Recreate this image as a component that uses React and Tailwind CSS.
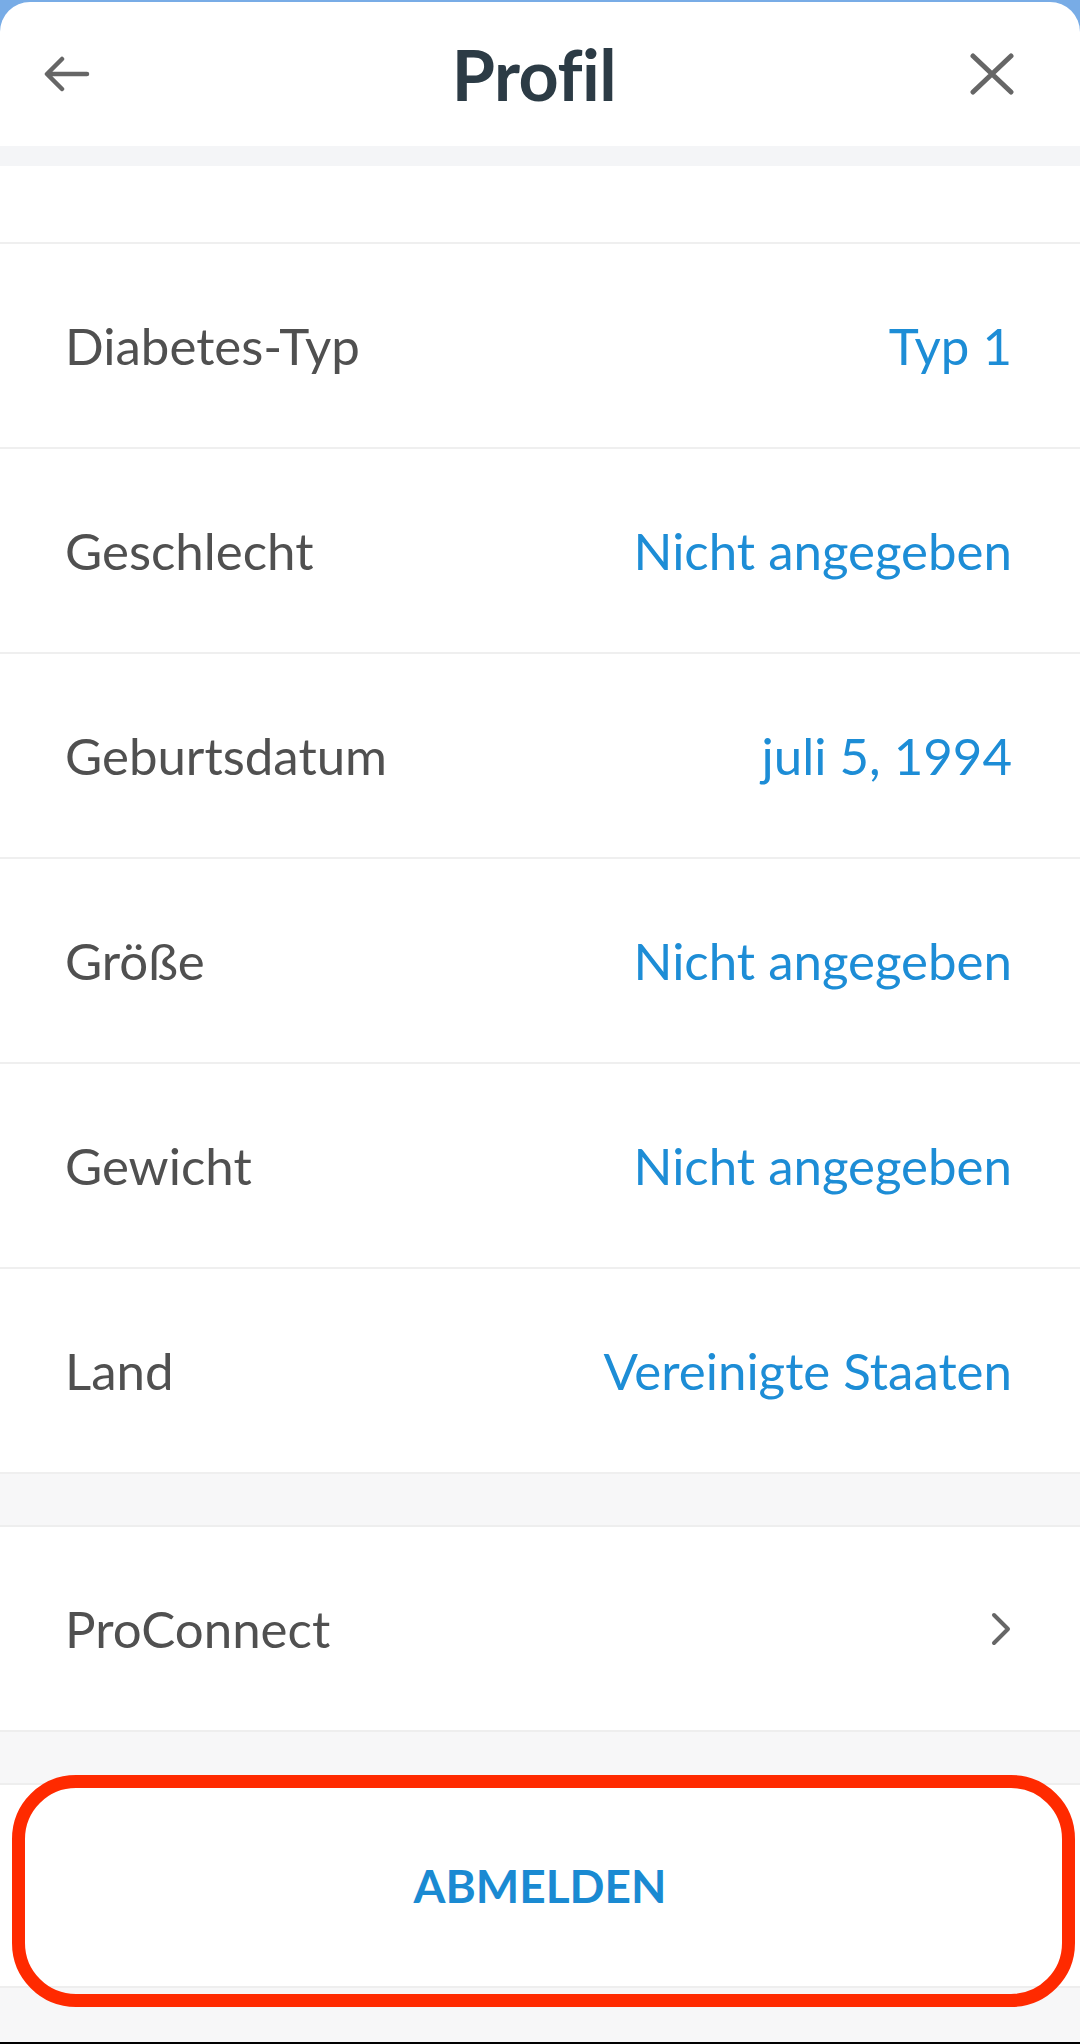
import React from "react";

const rows = [
  { label: "Diabetes-Typ", value: "Typ 1" },
  { label: "Geschlecht", value: "Nicht angegeben" },
  { label: "Geburtsdatum", value: "juli 5, 1994" },
  { label: "Größe", value: "Nicht angegeben" },
  { label: "Gewicht", value: "Nicht angegeben" },
  { label: "Land", value: "Vereinigte Staaten" },
];

function BackIcon() {
  return (
    <svg width="46" height="36" viewBox="0 0 46 36" fill="none">
      <path d="M43 18H4M18 3L3 18l15 15" stroke="#666" strokeWidth="4.5" strokeLinecap="round" strokeLinejoin="round" />
    </svg>
  );
}

function CloseIcon() {
  return (
    <svg width="44" height="42" viewBox="0 0 44 42" fill="none">
      <path d="M3 3l38 36M41 3L3 39" stroke="#666" strokeWidth="5" strokeLinecap="round" />
    </svg>
  );
}

function Chevron() {
  return (
    <svg width="22" height="34" viewBox="0 0 22 34" fill="none">
      <path d="M4 3l14 14L4 31" stroke="#666" strokeWidth="4" strokeLinecap="round" strokeLinejoin="round" />
    </svg>
  );
}

export default function App() {
  return (
    <div
      className="relative w-[1080px] h-[2044px] overflow-hidden bg-[#78ace6]"
      style={{ fontFamily: "Lato, 'Open Sans', sans-serif" }}
    >
      <div className="mt-[2px] flex h-[2042px] flex-col overflow-hidden rounded-t-[30px] bg-white">
        {/* header */}
        <div className="flex h-[144px] shrink-0 items-center justify-between pl-[44px] pr-[66px]">
          <BackIcon />
          <h1 className="ml-[8px] text-[70px] font-bold leading-none tracking-[-0.5px] text-[#2c3b45]">Profil</h1>
          <CloseIcon />
        </div>
        <div className="h-[20px] shrink-0 bg-[#f4f5f7]" />

        {/* list */}
        <div className="h-[78px] shrink-0 border-b-2 border-[#efefef] bg-white" />
        {rows.map((r) => (
          <div
            key={r.label}
            className="flex h-[205px] shrink-0 items-center justify-between border-b-2 border-[#efefef] pl-[65px] pr-[68px]"
          >
            <span className="text-[51px] leading-none text-[#505050]">{r.label}</span>
            <span className="text-[51px] leading-none text-[#1d8dd6]">{r.value}</span>
          </div>
        ))}

        <div className="h-[53px] shrink-0 border-b-2 border-[#eeeeee] bg-[#f7f7f8]" />
        <div className="flex h-[205px] shrink-0 items-center justify-between border-b-2 border-[#eeeeee] pl-[65px] pr-[68px]">
          <span className="text-[51px] leading-none text-[#505050]">ProConnect</span>
          <Chevron />
        </div>
        <div className="h-[53px] shrink-0 border-b-2 border-[#eeeeee] bg-[#f7f7f8]" />
        <div className="flex h-[203px] shrink-0 items-center justify-center border-b-2 border-[#eeeeee]">
          <span className="text-[46px] font-bold leading-none text-[#1a8ad2]">ABMELDEN</span>
        </div>
        <div className="flex-1 bg-[#f7f7f8]" />
      </div>
      <div className="absolute bottom-0 left-0 h-[2px] w-full bg-black" />

      {/* highlight frame around the sign-out button */}
      <div className="absolute left-[12px] top-[1775px] h-[232px] w-[1063px] rounded-[64px] border-[13px] border-[#ff2a00]" />
    </div>
  );
}
